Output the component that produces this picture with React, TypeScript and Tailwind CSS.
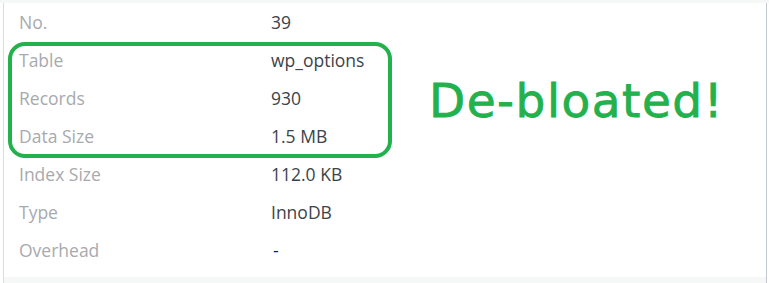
import React from "react";

const rows: { label: string; value: string; blue?: boolean }[] = [
  { label: "No.", value: "39" },
  { label: "Table", value: "wp_options" },
  { label: "Records", value: "930" },
  { label: "Data Size", value: "1.5 MB" },
  { label: "Index Size", value: "112.0 KB" },
  { label: "Type", value: "InnoDB" },
  { label: "Overhead", value: "-", blue: true },
];

export default function App() {
  return (
    <div className="relative w-[769px] h-[283px] bg-white flex flex-col overflow-hidden" style={{ fontFamily: '"Open Sans", "Noto Sans", sans-serif' }}>
      <div className="h-[3px] bg-[#f6f7f7] shrink-0" />
      <div className="flex-1 ml-[3px] mr-[2px] border-l border-[#dcdcde] border-r border-r-[#c3c8ce] flex flex-col">
        <div className="flex-1 flex flex-col">
          {rows.map((r) => (
            <div key={r.label} className="h-[38px] flex items-center text-[17.5px]">
              <div className="w-[267px] shrink-0 pl-[15px] text-[#a7aaad]">{r.label}</div>
              <div className={r.blue ? "text-[#0000ff] pl-[2px]" : "text-[#3c434a]"}>{r.value}</div>
            </div>
          ))}
        </div>
        <div className="h-[6px] bg-[#f6f7f7] shrink-0" />
      </div>
      <div className="absolute left-[8px] top-[42px] w-[384px] h-[116px] border-4 border-[#22b14c] rounded-[17px]" />
      <div
        className="absolute left-[429px] top-[71px] text-[47px] leading-[60px] text-[#22b14c] tracking-[1.5px] [-webkit-text-stroke:0.8px_#22b14c]"
        style={{ fontFamily: '"DejaVu Sans", sans-serif' }}
      >
        De-bloated!
      </div>
    </div>
  );
}
